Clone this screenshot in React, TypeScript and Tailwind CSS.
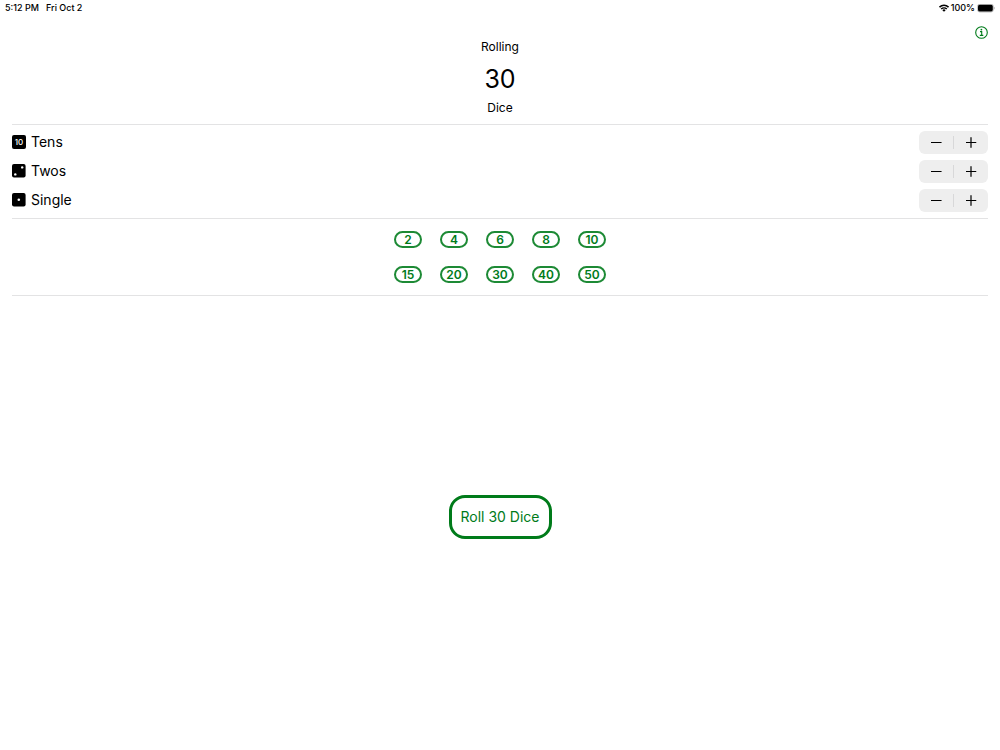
import { useState } from "react";

type Step = {
  label: string;
  amount: number;
};

const steps: Step[] = [
  { label: "Tens", amount: 10 },
  { label: "Twos", amount: 2 },
  { label: "Single", amount: 1 },
];

const presets = [2, 4, 6, 8, 10, 15, 20, 30, 40, 50];

function WifiIcon() {
  return (
    <svg viewBox="0 0 20 15" className="h-[8px] w-[10px]" fill="none" stroke="black" strokeWidth="3" aria-hidden="true">
      <path d="M1 5.8a13 13 0 0 1 18 0" />
      <path d="M4.4 9.6a8 8 0 0 1 11.2 0" />
      <path d="M10 15 6.7 11.8a4.6 4.6 0 0 1 6.6 0z" fill="black" stroke="none" />
    </svg>
  );
}

function BatteryIcon() {
  return (
    <svg viewBox="0 0 18 9" className="h-[9px] w-[18px]" aria-hidden="true">
      <rect x="0.4" y="0.2" width="16" height="7.8" rx="2.4" fill="white" stroke="#a3a3a3" strokeWidth="0.7" />
      <rect x="1" y="0.8" width="14.8" height="6.6" rx="1.6" fill="black" />
      <path d="M17.1 2.8c.9.3.9 2.5 0 2.8z" fill="#a3a3a3" />
    </svg>
  );
}

function InfoIcon() {
  return (
    <svg viewBox="0 0 26 26" className="size-[13px]" fill="none" stroke="currentColor" strokeWidth="2.2" aria-hidden="true">
      <circle cx="13" cy="13" r="11.6" />
      <path d="M10 11.2h3.4v7.4M9.6 18.8h7" />
      <circle cx="12.8" cy="7.2" r="1.8" fill="currentColor" stroke="none" />
    </svg>
  );
}

function DieIcon({ amount }: { amount: number }) {
  if (amount === 10) {
    return (
      <span className="flex size-[14px] items-center justify-center rounded-[2px] bg-black text-[8px] leading-none font-medium text-white">
        10
      </span>
    );
  }
  return (
    <svg viewBox="0 0 14 14" className="size-[14px]" aria-hidden="true">
      <rect width="13.6" height="13.6" rx="2" />
      {amount === 2 ? (
        <>
          <circle cx="3.3" cy="10.4" r="1.2" fill="white" />
          <circle cx="10.2" cy="3.4" r="1.2" fill="white" />
        </>
      ) : (
        <circle cx="6.8" cy="6.8" r="1.3" fill="white" />
      )}
    </svg>
  );
}

function Stepper({ label, onMinus, onPlus }: { label: string; onMinus: () => void; onPlus: () => void }) {
  return (
    <div className="flex h-[23px] w-[69px] items-center rounded-md bg-[#eeeeee]">
      <button type="button" aria-label={`Decrease ${label}`} onClick={onMinus} className="flex h-full flex-1 items-center justify-center">
        <svg viewBox="0 0 11 11" className="size-[11px]" stroke="black" strokeWidth="1.2" strokeLinecap="round" aria-hidden="true">
          <path d="M.5 5.5h9.6" />
        </svg>
      </button>
      <span className="h-[13px] w-px bg-[#d8d8d9]" />
      <button type="button" aria-label={`Increase ${label}`} onClick={onPlus} className="flex h-full flex-1 items-center justify-center">
        <svg viewBox="0 0 11 11" className="size-[11px]" stroke="black" strokeWidth="1.2" strokeLinecap="round" aria-hidden="true">
          <path d="M.2 5.5h9.6M5 .7v9.6" />
        </svg>
      </button>
    </div>
  );
}

export default function App() {
  const [count, setCount] = useState(30);

  const change = (delta: number) => setCount((c) => Math.max(1, c + delta));

  return (
    <div className="flex min-h-screen flex-col bg-white font-['Inter',sans-serif] text-black">
      <div className="flex h-4 items-center justify-between px-[5px] text-[9px] leading-4 font-medium">
        <div className="flex gap-[7px]">
          <span>5:12 PM</span>
          <span>Fri Oct 2</span>
        </div>
        <div className="flex items-center gap-[2px]">
          <WifiIcon />
          <span>100%</span>
          <BatteryIcon />
        </div>
      </div>

      <main className="flex flex-1 flex-col px-3">
        <header className="grid grid-cols-[1fr_auto_1fr] border-b border-[#e3e3e4] pb-2">
          <div className="col-start-2 flex flex-col items-center pt-[23px] text-[12px] leading-4">
            <p>Rolling</p>
            <p className="mt-2 mb-1 text-[25px] leading-[33px]">{count}</p>
            <p>Dice</p>
          </div>
          <button type="button" aria-label="Info" className="mt-[10px] self-start justify-self-end text-[#007b1a]">
            <InfoIcon />
          </button>
        </header>

        <section className="flex flex-col gap-1.5 border-b border-[#e3e3e4] py-1.5">
          {steps.map((s) => (
            <div key={s.label} className="flex items-start justify-between">
              <div className="flex items-center gap-[5px] text-[14px] leading-[22px]">
                <DieIcon amount={s.amount} />
                <span>{s.label}</span>
              </div>
              <Stepper label={s.label} onMinus={() => change(-s.amount)} onPlus={() => change(s.amount)} />
            </div>
          ))}
        </section>

        <section className="flex justify-center border-b border-[#e3e3e4] py-3">
          <div className="grid grid-cols-5 gap-[18px]">
            {presets.map((n) => (
              <button
                key={n}
                type="button"
                onClick={() => setCount(n)}
                className="flex h-[17px] w-[28px] items-center justify-center rounded-full border-2 border-[#1d8a35] text-[12px] leading-none font-semibold text-[#007b1a]"
              >
                {n}
              </button>
            ))}
          </div>
        </section>

        <div className="flex flex-1 items-center justify-center pb-3">
          <button type="button" className="h-11 rounded-2xl border-3 border-[#007b1a] px-[9px] text-[14px] leading-5 text-[#007b1a]">
            Roll {count} Dice
          </button>
        </div>
      </main>
    </div>
  );
}
